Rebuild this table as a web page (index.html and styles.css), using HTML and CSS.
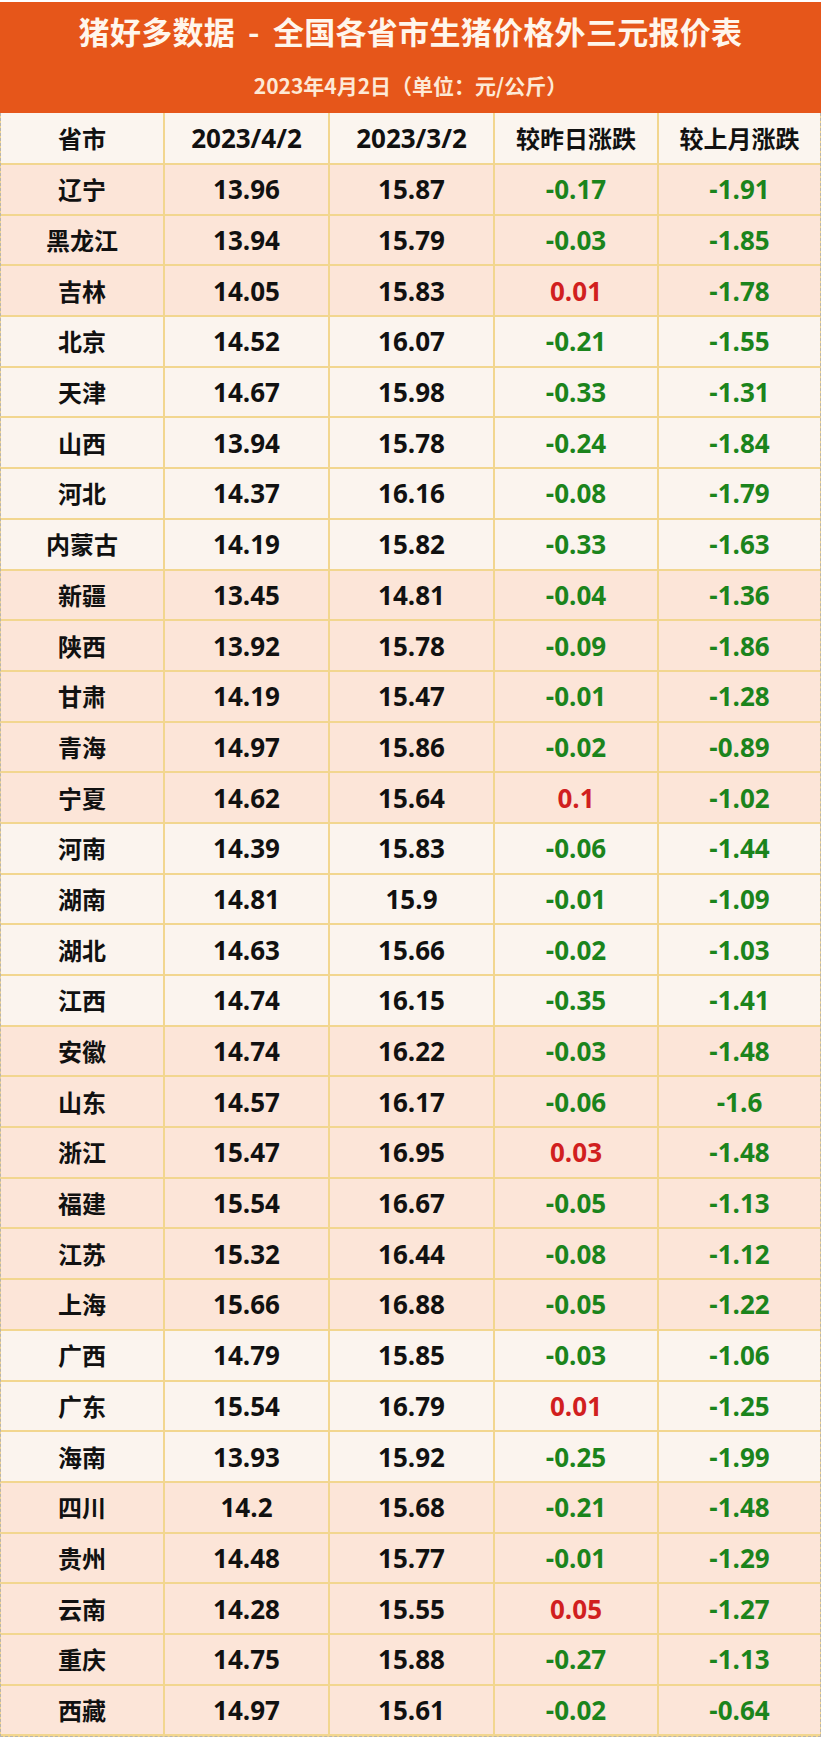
FILE: index.html
```html
<!DOCTYPE html>
<html lang="zh-CN">
<head>
<meta charset="utf-8">
<title>猪好多数据</title>
<link rel="stylesheet" href="styles.css">
</head>
<body>
<div class="page">
  <header class="banner">
    <h1 class="title">猪好多数据<span class="dash">-</span>全国各省市生猪价格外三元报价表</h1>
    <p class="subtitle">2023年4月2日（单位：元/公斤）</p>
  </header>
  <div class="table">
    <div class="row head"><div class="cell name">省市</div><div class="cell">2023/4/2</div><div class="cell">2023/3/2</div><div class="cell name">较昨日涨跌</div><div class="cell name">较上月涨跌</div></div>
    <div class="row pink"><div class="cell name">辽宁</div><div class="cell">13.96</div><div class="cell">15.87</div><div class="cell down">-0.17</div><div class="cell down">-1.91</div></div>
    <div class="row pink"><div class="cell name">黑龙江</div><div class="cell">13.94</div><div class="cell">15.79</div><div class="cell down">-0.03</div><div class="cell down">-1.85</div></div>
    <div class="row pink"><div class="cell name">吉林</div><div class="cell">14.05</div><div class="cell">15.83</div><div class="cell up">0.01</div><div class="cell down">-1.78</div></div>
    <div class="row light"><div class="cell name">北京</div><div class="cell">14.52</div><div class="cell">16.07</div><div class="cell down">-0.21</div><div class="cell down">-1.55</div></div>
    <div class="row light"><div class="cell name">天津</div><div class="cell">14.67</div><div class="cell">15.98</div><div class="cell down">-0.33</div><div class="cell down">-1.31</div></div>
    <div class="row light"><div class="cell name">山西</div><div class="cell">13.94</div><div class="cell">15.78</div><div class="cell down">-0.24</div><div class="cell down">-1.84</div></div>
    <div class="row light"><div class="cell name">河北</div><div class="cell">14.37</div><div class="cell">16.16</div><div class="cell down">-0.08</div><div class="cell down">-1.79</div></div>
    <div class="row light"><div class="cell name">内蒙古</div><div class="cell">14.19</div><div class="cell">15.82</div><div class="cell down">-0.33</div><div class="cell down">-1.63</div></div>
    <div class="row pink"><div class="cell name">新疆</div><div class="cell">13.45</div><div class="cell">14.81</div><div class="cell down">-0.04</div><div class="cell down">-1.36</div></div>
    <div class="row pink"><div class="cell name">陕西</div><div class="cell">13.92</div><div class="cell">15.78</div><div class="cell down">-0.09</div><div class="cell down">-1.86</div></div>
    <div class="row pink"><div class="cell name">甘肃</div><div class="cell">14.19</div><div class="cell">15.47</div><div class="cell down">-0.01</div><div class="cell down">-1.28</div></div>
    <div class="row pink"><div class="cell name">青海</div><div class="cell">14.97</div><div class="cell">15.86</div><div class="cell down">-0.02</div><div class="cell down">-0.89</div></div>
    <div class="row pink"><div class="cell name">宁夏</div><div class="cell">14.62</div><div class="cell">15.64</div><div class="cell up">0.1</div><div class="cell down">-1.02</div></div>
    <div class="row light"><div class="cell name">河南</div><div class="cell">14.39</div><div class="cell">15.83</div><div class="cell down">-0.06</div><div class="cell down">-1.44</div></div>
    <div class="row light"><div class="cell name">湖南</div><div class="cell">14.81</div><div class="cell">15.9</div><div class="cell down">-0.01</div><div class="cell down">-1.09</div></div>
    <div class="row light"><div class="cell name">湖北</div><div class="cell">14.63</div><div class="cell">15.66</div><div class="cell down">-0.02</div><div class="cell down">-1.03</div></div>
    <div class="row light"><div class="cell name">江西</div><div class="cell">14.74</div><div class="cell">16.15</div><div class="cell down">-0.35</div><div class="cell down">-1.41</div></div>
    <div class="row pink"><div class="cell name">安徽</div><div class="cell">14.74</div><div class="cell">16.22</div><div class="cell down">-0.03</div><div class="cell down">-1.48</div></div>
    <div class="row pink"><div class="cell name">山东</div><div class="cell">14.57</div><div class="cell">16.17</div><div class="cell down">-0.06</div><div class="cell down">-1.6</div></div>
    <div class="row pink"><div class="cell name">浙江</div><div class="cell">15.47</div><div class="cell">16.95</div><div class="cell up">0.03</div><div class="cell down">-1.48</div></div>
    <div class="row pink"><div class="cell name">福建</div><div class="cell">15.54</div><div class="cell">16.67</div><div class="cell down">-0.05</div><div class="cell down">-1.13</div></div>
    <div class="row pink"><div class="cell name">江苏</div><div class="cell">15.32</div><div class="cell">16.44</div><div class="cell down">-0.08</div><div class="cell down">-1.12</div></div>
    <div class="row pink"><div class="cell name">上海</div><div class="cell">15.66</div><div class="cell">16.88</div><div class="cell down">-0.05</div><div class="cell down">-1.22</div></div>
    <div class="row light"><div class="cell name">广西</div><div class="cell">14.79</div><div class="cell">15.85</div><div class="cell down">-0.03</div><div class="cell down">-1.06</div></div>
    <div class="row light"><div class="cell name">广东</div><div class="cell">15.54</div><div class="cell">16.79</div><div class="cell up">0.01</div><div class="cell down">-1.25</div></div>
    <div class="row light"><div class="cell name">海南</div><div class="cell">13.93</div><div class="cell">15.92</div><div class="cell down">-0.25</div><div class="cell down">-1.99</div></div>
    <div class="row pink"><div class="cell name">四川</div><div class="cell">14.2</div><div class="cell">15.68</div><div class="cell down">-0.21</div><div class="cell down">-1.48</div></div>
    <div class="row pink"><div class="cell name">贵州</div><div class="cell">14.48</div><div class="cell">15.77</div><div class="cell down">-0.01</div><div class="cell down">-1.29</div></div>
    <div class="row pink"><div class="cell name">云南</div><div class="cell">14.28</div><div class="cell">15.55</div><div class="cell up">0.05</div><div class="cell down">-1.27</div></div>
    <div class="row pink"><div class="cell name">重庆</div><div class="cell">14.75</div><div class="cell">15.88</div><div class="cell down">-0.27</div><div class="cell down">-1.13</div></div>
    <div class="row pink"><div class="cell name">西藏</div><div class="cell">14.97</div><div class="cell">15.61</div><div class="cell down">-0.02</div><div class="cell down">-0.64</div></div>
  </div>
</div>
</body>
</html>
```

FILE: styles.css
```css
html, body {
  margin: 0;
  padding: 0;
  background: #ffffff;
}

body {
  font-family: "Open Sans", "Noto Sans CJK SC", sans-serif;
  font-weight: 700;
  color: #111111;
}

.page {
  width: 821px;
}

.banner {
  background: #e6561a;
  margin-top: 2px;
  height: 111px;
  display: flex;
  flex-direction: column;
  align-items: center;
}

.title {
  margin: 9px 0 0 0;
  font-family: "Noto Sans CJK SC", sans-serif;
  font-size: 31px;
  line-height: 40px;
  font-weight: 700;
  color: #fff6ec;
  letter-spacing: 0.3px;
}

.dash {
  margin: 0 13px;
}

.subtitle {
  margin: 20px 0 0 0;
  font-family: "Noto Sans CJK SC", sans-serif;
  font-size: 21px;
  line-height: 28px;
  font-weight: 700;
  color: #fde9d6;
}

.table {
  display: flex;
  flex-direction: column;
  gap: 2px;
  background: #f2d68f;
  border-left: 1px dashed #b9b4ae;
  border-right: 1px dashed #b9b4ae;
  border-bottom: 1px dashed #b9b4ae;
  padding-bottom: 2px;
}

.row {
  display: grid;
  grid-template-columns: 162px 163px 163px 162px 1fr;
  gap: 2px;
  height: 48.7px;
}

.row.head {
  height: 50px;
}

.cell {
  display: flex;
  align-items: center;
  justify-content: center;
  font-size: 26px;
  line-height: 1;
}

.cell.name {
  font-family: "Noto Sans CJK SC", sans-serif;
  font-size: 24px;
}

.head .cell {
  background: #fbf5ef;
}

.pink .cell {
  background: #fce5d8;
}

.light .cell {
  background: #fbf4ee;
}

.down {
  color: #1b841c;
}

.up {
  color: #d11f1f;
}
```
